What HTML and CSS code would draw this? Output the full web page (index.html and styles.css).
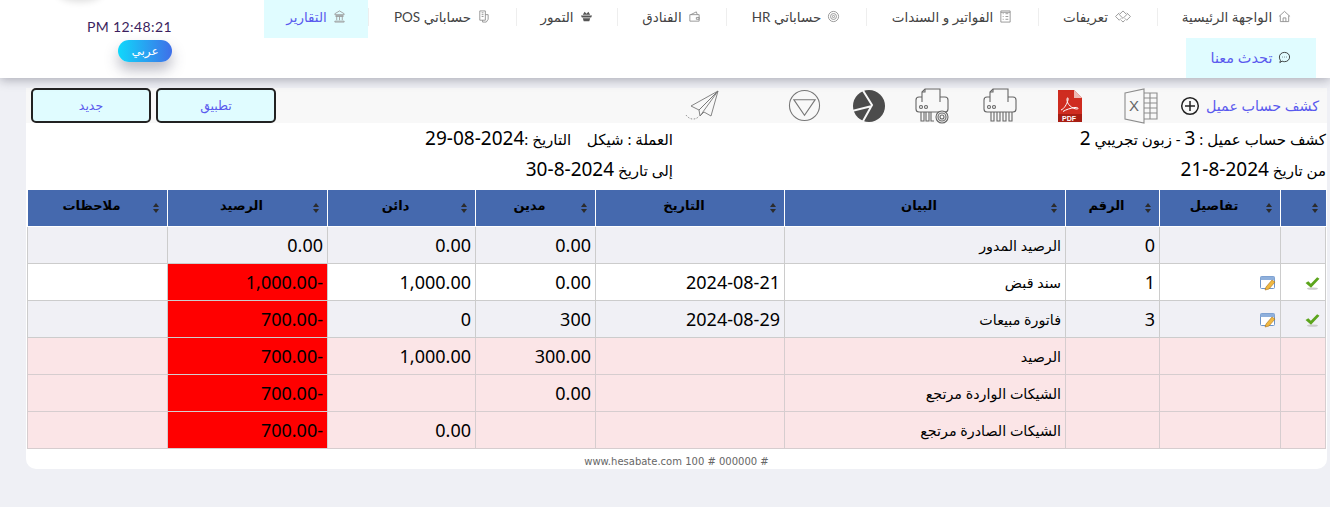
FILE: index.html
```html
<!DOCTYPE html>
<html lang="ar" dir="rtl">
<head>
<meta charset="utf-8">
<title>كشف حساب عميل</title>
<link rel="stylesheet" href="styles.css">
</head>
<body>
<header class="topbar">
  <nav class="nav">
    <a class="nav-item w-home"><svg class="nav-icon" viewBox="0 0 14 14"><path d="M1 7 7 1.500 13 7M2.500 6v6.500h9V6M5.500 12.500V8.500h3v4"/></svg>الواجهة الرئيسية</a>
    <a class="nav-item w-def"><svg class="nav-icon wide" viewBox="0 0 18 14"><path d="M9 1 13 5 9 9 5 5ZM5 3 1 7l4 4 2-2M13 3l4 4-4 4-2-2M7 11l2 2 2-2"/></svg>تعريفات</a>
    <a class="nav-item w-inv"><svg class="nav-icon" viewBox="0 0 14 14"><path d="M2 1h10v12H2ZM4 4h1M7 4h3M4 7h1M7 7h3M4 10h1M7 10h3M2 2.500h10"/></svg>الفواتير و السندات</a>
    <a class="nav-item w-hr"><svg class="nav-icon" viewBox="0 0 14 14"><circle cx="7" cy="7" r="5.500"/><circle cx="7" cy="7" r="3.200"/><circle cx="7" cy="7" r="1.200"/></svg>حساباتي HR</a>
    <a class="nav-item w-hotel"><svg class="nav-icon" viewBox="0 0 14 14"><path d="M2 5h10v7H2ZM3 5l6-3 1 3M9 8h3v2H9Z"/></svg>الفنادق</a>
    <a class="nav-item w-dates"><svg class="nav-icon solid" viewBox="0 0 14 14"><path d="M1 6h12l-1 2H2ZM3 9h8l-1 3H4ZM3 5l2-3 2 2 2-2 2 3Z"/></svg>التمور</a>
    <a class="nav-item w-pos"><svg class="nav-icon" viewBox="0 0 14 14"><path d="M3 1h6v10H3ZM5 3h2M5 5h2M5 7h2M9 5h3v5l-2 3H6v-2"/></svg>حساباتي POS</a>
    <a class="nav-item w-rep active"><svg class="nav-icon bank" viewBox="0 0 14 14"><path d="M2 4 7 1l5 3v1H2ZM3 6h8v1H3ZM4 7v4M7 7v4M10 7v4M2 12h10v1H2Z"/></svg>التقارير</a>
    <a class="nav-item w-chat chat"><svg class="nav-icon dark" viewBox="0 0 14 14"><path d="M7 1.500c3.200 0 5.500 2.200 5.500 5s-2.300 5-5.500 5c-1 0-1.900-.2-2.600-.6L2 12.500l.6-2.400C1.900 9.200 1.500 7.900 1.500 6.500c0-2.800 2.300-5 5.500-5Z"/><path d="M4.800 6.500h.6M6.800 6.500h.6M8.800 6.500h.6"/></svg>تحدث معنا</a>
  </nav>
  <div class="side">
    <div class="clock">12:48:21 PM</div>
    <a class="lang">عربي</a>
  </div>
</header>

<main class="card">
  <div class="toolbar">
    <span class="title">كشف حساب عميل</span>
    <svg class="ico plus" viewBox="0 0 20 20"><circle cx="10" cy="10" r="8.300"/><path d="M10 5v10M5 10h10"/></svg>
    <svg class="ico excel" viewBox="0 0 34 36"><path d="M1 5 20 1v34L1 31Z"/><path d="M20 5h13v26H20M20 10h13M20 15h13M20 20h13M20 25h13M26 5v26"/><text x="5" y="23" class="xl">X</text></svg>
    <svg class="ico pdf" viewBox="0 0 24 34"><path class="pdf-page" d="M0 1h16l8 8v24H0Z"/><path class="pdf-fold" d="M16 1v8h8Z"/><path class="pdf-band" d="M0 25h24v8H0Z"/><path class="pdf-sign" d="M3 21c3-1 6-6 7-10 .5-3-1-3-1 0 0 4 5 9 10 9 2 0 1-2-2-1.500-4 .5-9 2-12 4"/><text x="4" y="31.500" class="pdf-txt">PDF</text></svg>
    <svg class="ico shred" viewBox="0 0 34 36"><path d="M7 14V4l3-3h15v13"/><path d="M10 1v3H7"/><path d="M7 9H4Q1 9 1 12v9q0 3 3 3h26q3 0 3-3v-9q0-3-3-3h-5"/><circle cx="6" cy="19" r="1.500"/><circle cx="11" cy="19" r="1.500"/><path d="M8 24v9h3v-9M14 24v9h3v-9M20 24v9h3v-9M26 24v9h3v-9"/></svg>
    <svg class="ico shred" viewBox="0 0 34 36"><path d="M7 14V4l3-3h15v13"/><path d="M10 1v3H7"/><path d="M7 9H4Q1 9 1 12v9q0 3 3 3h26q3 0 3-3v-9q0-3-3-3h-5"/><circle cx="6" cy="19" r="1.500"/><circle cx="11" cy="19" r="1.500"/><path d="M6 24v9h3v-9M11 24v9h3v-9M16 24v9h3"/><circle cx="27" cy="29" r="6" class="paper"/><circle cx="27" cy="29" r="4"/><circle cx="27" cy="29" r="2"/></svg>
    <svg class="ico pie" viewBox="0 0 32 34"><circle cx="16" cy="17" r="16" class="fill"/><path class="cut" d="M9 0 19 16 9 34M19 17 -1 22"/></svg>
    <svg class="ico tri" viewBox="0 0 34 34"><circle cx="17" cy="17" r="15.500"/><path d="M6 11h22L17 27Z"/></svg>
    <svg class="ico plane" viewBox="0 0 34 32"><path d="M33 1 6 16l8 4Z"/><path d="M33 1 14 20l1 6 4-4 7 4Z"/><path d="M15 26 33 1"/><path class="dash" d="M1 25q3 4 7 4t6-3"/></svg>
    <a class="btn apply">تطبيق</a>
    <a class="btn new">جديد</a>
  </div>

  <div class="info">
    <div class="info-col wide">
      <p>كشف حساب عميل : <span class="num">3</span> - زبون تجريبي <span class="num">2</span></p>
      <p>من تاريخ <span class="num">2024-8-21</span></p>
    </div>
    <div class="info-col">
      <p>العملة : شيكل &nbsp;&nbsp; التاريخ :<span class="num">2024-08-29</span></p>
      <p>إلى تاريخ <span class="num">2024-8-30</span></p>
    </div>
  </div>

  <table class="grid">
    <colgroup>
      <col class="c1"><col class="c2"><col class="c3"><col class="c4"><col class="c5"><col class="c6"><col class="c7"><col class="c8"><col class="c9">
    </colgroup>
    <thead>
      <tr>
        <th></th><th>تفاصيل</th><th>الرقم</th><th>البيان</th><th>التاريخ</th><th>مدين</th><th>دائن</th><th>الرصيد</th><th>ملاحظات</th>
      </tr>
    </thead>
    <tbody>
      <tr class="alt"><td></td><td></td><td>0</td><td class="ar">الرصيد المدور</td><td></td><td>0.00</td><td>0.00</td><td>0.00</td><td></td></tr>
      <tr>
        <td class="icon-cell"><svg class="check" viewBox="0 0 16 14"><ellipse cx="8" cy="12.500" rx="6" ry="1.300" class="shadow"/><path d="M.5 6.500 3.500 4.500l2.700 2.800L13 .3 15.500 2 6.400 11.500Z"/></svg></td>
        <td class="icon-cell"><svg class="edit" viewBox="0 0 16 15"><rect x=".5" y=".5" width="14" height="12" rx="1" class="win"/><path d="M.5 1.500a1 1 0 0 1 1-1h12a1 1 0 0 1 1 1V4H.5Z" class="bar"/><path d="M5 14 6 11l6-7 3 2-6 7-4 1Z" class="pen"/></svg></td>
        <td>1</td><td class="ar">سند قبض</td><td>2024-08-21</td><td>0.00</td><td>1,000.00</td><td class="neg">-1,000.00</td><td></td></tr>
      <tr class="alt">
        <td class="icon-cell"><svg class="check" viewBox="0 0 16 14"><ellipse cx="8" cy="12.500" rx="6" ry="1.300" class="shadow"/><path d="M.5 6.500 3.500 4.500l2.700 2.800L13 .3 15.500 2 6.400 11.500Z"/></svg></td>
        <td class="icon-cell"><svg class="edit" viewBox="0 0 16 15"><rect x=".5" y=".5" width="14" height="12" rx="1" class="win"/><path d="M.5 1.500a1 1 0 0 1 1-1h12a1 1 0 0 1 1 1V4H.5Z" class="bar"/><path d="M5 14 6 11l6-7 3 2-6 7-4 1Z" class="pen"/></svg></td>
        <td>3</td><td class="ar">فاتورة مبيعات</td><td>2024-08-29</td><td>300</td><td>0</td><td class="neg">-700.00</td><td></td></tr>
      <tr class="sum"><td></td><td></td><td></td><td class="ar">الرصيد</td><td></td><td>300.00</td><td>1,000.00</td><td class="neg">-700.00</td><td></td></tr>
      <tr class="sum"><td></td><td></td><td></td><td class="ar">الشيكات الواردة مرتجع</td><td></td><td>0.00</td><td></td><td class="neg">-700.00</td><td></td></tr>
      <tr class="sum"><td></td><td></td><td></td><td class="ar">الشيكات الصادرة مرتجع</td><td></td><td></td><td>0.00</td><td class="neg">-700.00</td><td></td></tr>
    </tbody>
  </table>
  <div class="foot"># 000000 # 100 www.hesabate.com</div>
</main>
</body>
</html>
```
FILE: styles.css
```css
* { box-sizing: border-box; }
html, body { margin: 0; height: 507px; overflow: hidden; }
body {
  background: #eff0f5;
  font-family: "DejaVu Sans", sans-serif;
  color: #000;
}
p { margin: 0; }
svg text { direction: ltr; }

.topbar {
  height: 78px;
  background: #fff;
  display: flex;
  box-shadow: 0 2px 10px rgba(40, 40, 60, .35);
  position: relative;
}
.nav {
  width: 1066px;
  margin-right: 14px;
  display: flex;
  flex-wrap: wrap;
  align-content: flex-start;
}
.nav-item {
  height: 38px;
  display: flex;
  align-items: center;
  justify-content: center;
  gap: 6px;
  font-size: 13.500px;
  color: #444;
  white-space: nowrap;
  position: relative;
  padding-bottom: 5px;
  font-family: Lato, "DejaVu Sans", sans-serif;
}
.nav-item::after {
  content: "";
  position: absolute;
  left: 0;
  top: 8px;
  height: 18px;
  border-left: 1px solid #eee;
}
.w-home { width: 159px; }
.w-def { width: 119px; }
.w-inv { width: 172px; }
.w-hr { width: 140px; }
.w-hotel { width: 109px; }
.w-dates { width: 101px; }
.w-pos { width: 148px; }
.w-rep { width: 104px; }
.w-chat { width: 130px; height: 40px; }
.nav-item.active, .nav-item.chat { background: #e0fcff; color: #5a5aee; }
.nav-item.chat { font-size: 14.500px; padding-bottom: 2px; }
.active::after, .chat::after { display: none; }
.nav-icon { width: 13px; height: 13px; flex: none; fill: none; stroke: #888; stroke-width: .9; }
.nav-icon.wide { width: 18px; }
.nav-icon.solid { fill: #555; stroke: none; }
.nav-icon.bank { stroke: #999; }
.nav-icon.dark { stroke: #222; }

.side {
  width: 172px;
  padding-top: 18px;
  position: relative;
}
.side::before {
  content: "";
  position: absolute;
  top: -20px;
  left: -21px;
  width: 46px;
  height: 20px;
  border-radius: 50%;
  box-shadow: 0 2px 7px rgba(0, 0, 0, .13);
}
.clock {
  padding-right: 78px;
  font: 14px/18px Lato, sans-serif;
  letter-spacing: .4px;
  color: #3c1f5e;
  white-space: nowrap;
}
.lang {
  display: block;
  margin: 4px 78px 0 0;
  width: 54px;
  height: 22px;
  border-radius: 11px;
  background: linear-gradient(90deg, #10d8fb, #3f6fe8);
  color: #fff;
  font: 12px/21px Lato, "DejaVu Sans", sans-serif;
  text-align: center;
  box-shadow: 0 8px 14px rgba(60, 60, 90, .35);
}

.card {
  margin: 10px 3px 0 0;
  width: 1301px;
  height: 381px;
  background: #fff;
  border-radius: 0 0 10px 10px;
}

.toolbar {
  height: 35px;
  background: #f8f8f8;
  padding-right: 8px;
  display: flex;
  align-items: center;
}
.title { font-size: 14.300px; color: #5a5aee; font-family: Lato, "DejaVu Sans", sans-serif; width: 119px; white-space: nowrap; }
.ico { flex: none; fill: none; stroke: #666; stroke-width: 1.100; }
.plus { width: 20px; height: 20px; stroke: #222; stroke-width: 1.500; margin-left: 22px; }
.excel { width: 34px; height: 36px; margin-left: 42px; stroke: #8c8c8c; }
.xl { font: 15px "Liberation Sans", sans-serif; fill: #666; stroke: none; }
.pdf { width: 24px; height: 34px; margin-left: 41px; stroke: none; }
.pdf-page { fill: #cf2c20; }
.pdf-fold { fill: #eeb9b3; }
.pdf-band { fill: #a81e14; }
.pdf-sign { fill: none; stroke: #fff; stroke-width: 1; }
.pdf-txt { font: 700 7px "Liberation Sans", sans-serif; fill: #fff; }
.shred { width: 34px; height: 36px; }
.shred:nth-of-type(4) { margin-left: 34px; }
.shred:nth-of-type(5) { margin-left: 30px; }
.paper { fill: #f8f8f8; }
.pie { width: 32px; height: 34px; margin-left: 32px; }
.pie .fill { fill: #4c4c4c; stroke: none; }
.pie .cut { stroke: #f8f8f8; stroke-width: 2; }
.tri { width: 33px; height: 33px; margin-left: 69px; stroke: #777; }
.plane { width: 34px; height: 32px; stroke: #777; stroke-width: .9; margin-left: 409px; }
.dash { stroke-dasharray: 1.500 1.500; }
.btn {
  width: 120px;
  height: 35px;
  border: 2px solid #222;
  border-radius: 5px;
  background: #e0fcff;
  color: #5a5aee;
  font: 12.500px/31px Lato, "DejaVu Sans", sans-serif;
  text-align: center;
}
.new { margin-right: 5px; }

.info { display: flex; font-size: 15px; line-height: 30px; height: 67px; padding-right: 1px; }
.info-col { white-space: nowrap; font-family: "Noto Sans", "DejaVu Sans", sans-serif; }
.info-col.wide { width: 653px; }
.num { font-size: 19px; }

.grid {
  width: 1299px;
  margin-right: 1px;
  table-layout: fixed;
  border-collapse: separate;
  border-spacing: 0;
  font-family: "Noto Sans", "DejaVu Sans", sans-serif;
  font-size: 18px;
}
.c1 { width: 46px; } .c2 { width: 121px; } .c3 { width: 94px; } .c4 { width: 281px; } .c5 { width: 189px; }
.c6 { width: 120px; } .c7 { width: 148px; } .c8 { width: 160px; } .c9 { width: 140px; }
th {
  height: 37px;
  padding: 0 12px 7px 0;
  background-color: #4569ae;
  background-clip: padding-box;
  border-left: 1px solid #fff;
  border-bottom: 1px solid #fff;
  font-size: 13px;
  font-weight: 700;
  color: #000;
  text-align: center;
  position: relative;
}
th::before, th::after {
  content: "";
  position: absolute;
  right: 8px;
  border-left: 3.500px solid transparent;
  border-right: 3.500px solid transparent;
}
th::before { top: 13px; border-bottom: 4px solid #2c2c2c; }
th::after { top: 19px; border-top: 4px solid #2c2c2c; }
td {
  height: 37px;
  padding: 0 4px;
  border-left: 1px solid #ccc;
  border-bottom: 1px solid #ccc;
  text-align: right;
  white-space: nowrap;
}
td:first-child { border-right: 1px solid #ccc; }
.ar { font-size: 14.300px; }
.alt td { background: #f0f0f5; }
.sum td { background: #fbe5e7; border-color: #d6cdcf; }
.sum td.neg, td.neg { background: #f00; }
.icon-cell { padding: 3px 4px 0 0; }
.check { display: block; width: 15px; height: 13px; margin-right: 1px; }
.check path { fill: #5ca51c; }
.check .shadow { fill: #ccc; }
.edit { display: block; width: 16px; height: 15px; }
.win { fill: #fff; stroke: #6f95c8; }
.bar { fill: #8fb0dc; }
.pen { fill: #f0b840; stroke: #a8701c; stroke-width: .6; }
.foot { font: 10px/20px "DejaVu Sans", sans-serif; text-align: center; color: #666; padding-top: 3px; }
```
